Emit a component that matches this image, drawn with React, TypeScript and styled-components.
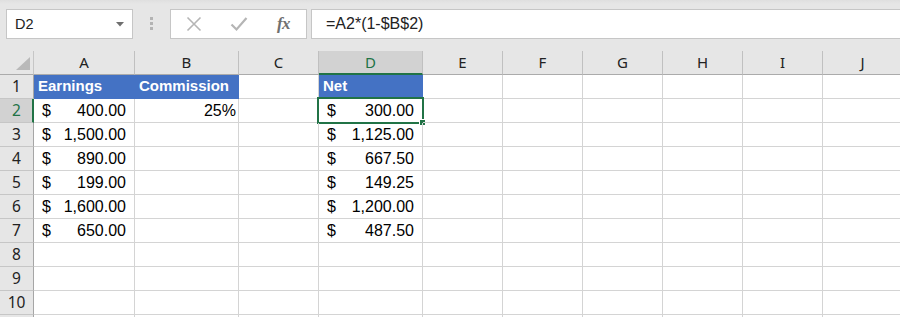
import React from "react";
import styled, { createGlobalStyle, css } from "styled-components";

const Global = createGlobalStyle`
  html, body { margin: 0; padding: 0; background: #ffffff; overflow: hidden; }
  #root { width: 900px; height: 317px; overflow: hidden; }
`;

const Page = styled.div`
  width: 900px;
  height: 317px;
  overflow: hidden;
  background: #ffffff;
`;

const Toolbar = styled.div`
  height: 51px;
  box-sizing: border-box;
  padding: 9px 0 0 6px;
  display: flex;
  align-items: flex-start;
  background: linear-gradient(#dfdfdf 0, #e6e6e6 4px, #e6e6e6 100%);
`;

const NameBox = styled.div`
  width: 127px;
  height: 30px;
  box-sizing: border-box;
  border: 1px solid #c6c6c6;
  background: #ffffff;
  display: flex;
  align-items: center;
  justify-content: space-between;
  padding: 0 8px 0 8px;
  font-family: "Liberation Sans", Arial, sans-serif;
  font-size: 14.5px;
  color: #222222;
`;

const Dots = styled.div`
  margin: 8px 0 0 17px;
  width: 3px;
  display: flex;
  flex-direction: column;
  gap: 2px;
  span {
    display: block;
    width: 3px;
    height: 3px;
    background: #b3b3b3;
  }
`;

const Buttons = styled.div`
  margin-left: 17px;
  width: 137px;
  height: 30px;
  box-sizing: border-box;
  border: 1px solid #c6c6c6;
  background: #ffffff;
  display: flex;
  align-items: center;
`;

const IconButton = styled.div<{ $w: number }>`
  width: ${(p) => p.$w}px;
  height: 28px;
  display: flex;
  align-items: center;
  justify-content: center;
`;

const Fx = styled.span`
  font-family: "Liberation Serif", "Times New Roman", serif;
  font-style: italic;
  font-weight: bold;
  font-size: 17px;
  color: #707070;
  letter-spacing: -0.5px;
`;

const FormulaBox = styled.div`
  margin-left: 4px;
  flex: 1;
  height: 30px;
  box-sizing: border-box;
  border: 1px solid #c6c6c6;
  border-right: none;
  background: #ffffff;
  display: flex;
  align-items: center;
  padding-left: 14px;
  font-family: "Liberation Sans", Arial, sans-serif;
  font-size: 16px;
  color: #222222;
`;

const Grid = styled.div`
  display: grid;
  grid-template-columns: 34px 101px 104px 80px 104px repeat(6, 80px);
  grid-auto-rows: 24px;
  width: 983px;
`;

const CornerCell = styled.div`
  position: relative;
  box-sizing: border-box;
  background: #e6e6e6;
  border-right: 1px solid #c6c6c6;
  border-bottom: 1px solid #ababab;
`;

const ColHeader = styled.div<{ $sel?: boolean }>`
  box-sizing: border-box;
  background: ${(p) => (p.$sel ? "#d2d2d2" : "#e6e6e6")};
  color: ${(p) => (p.$sel ? "#217346" : "#222222")};
  border-right: 1px solid #c0c0c0;
  border-bottom: ${(p) => (p.$sel ? "2px solid #217346" : "1px solid #ababab")};
  font-family: "Noto Sans", "Open Sans", sans-serif;
  font-size: 15px;
  line-height: 23px;
  text-align: center;
`;

const RowHeader = styled.div<{ $sel?: boolean }>`
  box-sizing: border-box;
  background: ${(p) => (p.$sel ? "#d2d2d2" : "#e6e6e6")};
  color: ${(p) => (p.$sel ? "#217346" : "#222222")};
  border-right: ${(p) => (p.$sel ? "2px solid #217346" : "1px solid #a6a6a6")};
  border-bottom: 1px solid #c6c6c6;
  font-family: "Noto Sans", "Open Sans", sans-serif;
  font-size: 15.5px;
  line-height: 23px;
  text-align: center;
  padding-left: ${(p) => (p.$sel ? 1 : 0)}px;
`;

const Cell = styled.div<{ $fill?: boolean; $align?: "left" | "right" }>`
  position: relative;
  box-sizing: border-box;
  border-right: 1px solid #d4d4d4;
  border-bottom: 1px solid #d4d4d4;
  font-family: "Liberation Sans", Arial, sans-serif;
  font-size: 16px;
  line-height: 23px;
  color: #000000;
  white-space: nowrap;
  text-align: ${(p) => p.$align ?? "left"};
  padding: 0 2px 0 4px;
  ${(p) =>
    p.$fill &&
    css`
      background: #4472c4;
      border-right-color: #4472c4;
      border-bottom-color: #4472c4;
      color: #ffffff;
      font-weight: bold;
      font-size: 15px;
      line-height: 22px;
    `}
`;

const Accounting = styled.div`
  display: flex;
  justify-content: space-between;
  padding: 0 6px 0 4px;
`;

const Selection = styled.div`
  position: absolute;
  left: -2px;
  top: -2px;
  width: 107px;
  height: 27px;
  box-sizing: border-box;
  border: 2px solid #217346;
  pointer-events: none;
`;

const FillHandle = styled.div`
  position: absolute;
  right: -3px;
  bottom: -3px;
  width: 6px;
  height: 6px;
  box-sizing: border-box;
  background: #217346;
  border: 1px solid #ffffff;
  border-right: none;
  border-bottom: none;
`;

const Triangle = styled.svg`
  position: absolute;
  left: 15px;
  top: 6px;
`;

const COLS = ["A", "B", "C", "D", "E", "F", "G", "H", "I", "J"];
const earnings = ["400.00", "1,500.00", "890.00", "199.00", "1,600.00", "650.00"];
const net = ["300.00", "1,125.00", "667.50", "149.25", "1,200.00", "487.50"];

function Money({ value }: { value: string }) {
  return (
    <Accounting>
      <span>$</span>
      <span>{value}</span>
    </Accounting>
  );
}

export default function App() {
  const rows: React.ReactNode[] = [];
  for (let r = 1; r <= 11; r++) {
    rows.push(
      <RowHeader key={`rh${r}`} $sel={r === 2}>
        {r <= 10 ? r : ""}
      </RowHeader>
    );
    COLS.forEach((c) => {
      const key = `${c}${r}`;
      if (r === 1 && c === "A") {
        rows.push(<Cell key={key} $fill>Earnings</Cell>);
      } else if (r === 1 && c === "B") {
        rows.push(<Cell key={key} $fill>Commission</Cell>);
      } else if (r === 1 && c === "D") {
        rows.push(<Cell key={key} $fill>Net</Cell>);
      } else if (r === 2 && c === "B") {
        rows.push(
          <Cell key={key} $align="right">
            25%
          </Cell>
        );
      } else if (r >= 2 && r <= 7 && c === "A") {
        rows.push(
          <Cell key={key}>
            <Money value={earnings[r - 2]} />
          </Cell>
        );
      } else if (r >= 2 && r <= 7 && c === "D") {
        rows.push(
          <Cell key={key}>
            <Money value={net[r - 2]} />
            {r === 2 && (
              <Selection>
                <FillHandle />
              </Selection>
            )}
          </Cell>
        );
      } else {
        rows.push(<Cell key={key} />);
      }
    });
  }

  return (
    <Page>
      <Global />
      <Toolbar>
        <NameBox>
          <span>D2</span>
          <svg width="8" height="5" viewBox="0 0 8 5">
            <path d="M0 0 L8 0 L4 4.5 Z" fill="#6f6f6f" />
          </svg>
        </NameBox>
        <Dots>
          <span />
          <span />
          <span />
        </Dots>
        <Buttons>
          <IconButton $w={45}>
            <svg width="16" height="16" viewBox="0 0 16 16">
              <path d="M1.5 1.5 L14.5 14.5 M14.5 1.5 L1.5 14.5" stroke="#b5b5b5" strokeWidth="1.6" fill="none" />
            </svg>
          </IconButton>
          <IconButton $w={45}>
            <svg width="18" height="16" viewBox="0 0 18 16">
              <path d="M1.5 8.5 L6.5 13.5 L16.5 2" stroke="#b5b5b5" strokeWidth="2.2" fill="none" />
            </svg>
          </IconButton>
          <IconButton $w={45}>
            <Fx>fx</Fx>
          </IconButton>
        </Buttons>
        <FormulaBox>=A2*(1-$B$2)</FormulaBox>
      </Toolbar>
      <Grid>
        <CornerCell>
          <Triangle width="16" height="14" viewBox="0 0 16 14">
            <path d="M15 0 L15 13 L1 13 Z" fill="#b9b9b9" />
          </Triangle>
        </CornerCell>
        {COLS.map((c) => (
          <ColHeader key={c} $sel={c === "D"}>
            {c}
          </ColHeader>
        ))}
        {rows}
      </Grid>
    </Page>
  );
}
